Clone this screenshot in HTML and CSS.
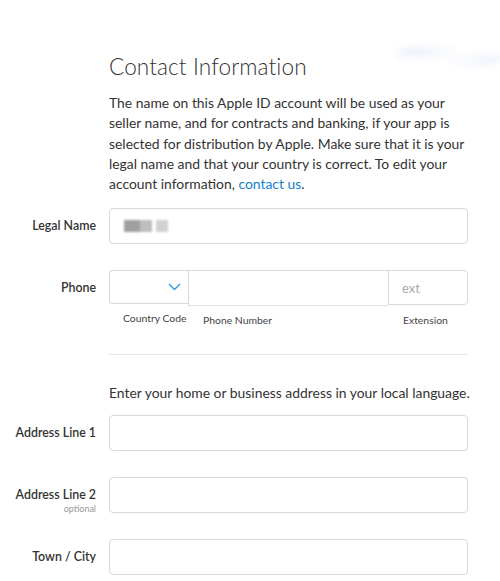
FILE: index.html
```html
<!DOCTYPE html>
<html>
<head>
<meta charset="utf-8">
<link rel="stylesheet" href="styles.css">
</head>
<body>
<div class="page">
  <div class="blur-deco"></div>
  <form class="form">
    <div class="intro">
      <h1 class="title">Contact Information</h1>
      <p class="lead">The name on this Apple ID account will be used as your seller name, and for contracts and banking, if your app is selected for distribution by Apple. Make sure that it is your legal name and that your country is correct. To edit your account information, <a class="link" href="#">contact us</a>.</p>
    </div>

    <div class="row row-legal">
      <label class="label">Legal Name</label>
      <div class="field"><div class="input input-name"><span class="masked"></span></div></div>
    </div>

    <div class="row row-phone">
      <label class="label label-phone">Phone</label>
      <div class="phone">
        <div class="phone-col col-cc">
          <div class="input select">
            <svg class="chev" width="13" height="8" viewBox="0 0 13 8"><path d="M1 1l5.5 5.5L12 1" fill="none" stroke="#2d9be0" stroke-width="1.4"/></svg>
          </div>
          <span class="sub sub-cc">Country Code</span>
        </div>
        <div class="phone-col col-num">
          <div class="input num"></div>
          <span class="sub sub-num">Phone Number</span>
        </div>
        <div class="phone-col col-ext">
          <div class="input ext"><span class="ph">ext</span></div>
          <span class="sub sub-ext">Extension</span>
        </div>
      </div>
    </div>

    <div class="row row-divider"><span></span><hr class="divider"></div>

    <div class="row row-note"><span></span><p class="note">Enter your home or business address in your local language.</p></div>

    <div class="row row-addr">
      <label class="label">Address Line 1</label>
      <div class="input"></div>
    </div>
    <div class="row row-addr">
      <label class="label">Address Line 2<span class="optional">optional</span></label>
      <div class="input"></div>
    </div>
    <div class="row row-addr">
      <label class="label">Town / City</label>
      <div class="input"></div>
    </div>
  </form>
</div>
</body>
</html>
```
FILE: styles.css
```css
* { box-sizing: border-box; }
html, body { margin: 0; padding: 0; background: #fff; }
body {
  font-family: "Lato", "Open Sans", sans-serif;
  color: #333;
  width: 500px;
  height: 581px;
  overflow: hidden;
}
.page { position: relative; padding-top: 51px; }
.blur-deco {
  position: absolute;
  left: 395px; top: 40px;
  width: 110px; height: 30px;
  border-radius: 50%;
  background: radial-gradient(ellipse at 20% 40%, rgba(200,215,240,0.35), transparent 40%),
              radial-gradient(ellipse at 90% 70%, rgba(200,215,240,0.35), transparent 35%);
  filter: blur(3px);
}
.form {
  display: grid;
  grid-template-columns: 96px 359px;
  column-gap: 13px;
}
.intro { grid-column: 2; }
.title {
  margin: 0;
  font-weight: 300;
  font-size: 22.6px;
  line-height: 32px;
  color: #333;
  letter-spacing: 0.1px;
}
.lead {
  margin: 10px 0 0;
  font-size: 13.9px;
  line-height: 20.3px;
  color: #333;
  width: 362px;
}
.link { color: #0f7fcb; text-decoration: none; }

.row { display: contents; }
.label {
  grid-column: 1;
  text-align: right;
  font-size: 12.4px;
  font-weight: 600;
  color: #333;
  display: flex;
  flex-direction: column;
  align-items: flex-end;
  justify-content: center;
  line-height: 16px;
  position: relative;
}
.row-legal .label, .row-legal .field { margin-top: 14px; }
.field { grid-column: 2; }
.input {
  grid-column: 2;
  height: 36px;
  border: 1px solid #d8d8d8;
  border-radius: 4px;
  background: #fff;
}
.input-name { display: flex; align-items: center; padding-left: 14px; }
.masked {
  width: 44px; height: 12px;
  background: linear-gradient(90deg, #a0a0a0 0 16px, #bdbdbd 16px 28px, #fff 28px 32px, #d0d0d0 32px 44px);
  filter: blur(1.2px);
}

.label-phone { margin-top: 26px; height: 35px; }
.phone { grid-column: 2; margin-top: 26px; display: flex; }
.phone-col { display: flex; flex-direction: column; }
.col-cc { width: 79px; }
.col-num { width: 200px; }
.col-ext { width: 80px; }
.phone .input { height: 35px; }
.select {
  border-radius: 4px 0 0 4px;
  border-right: none;
  display: flex; align-items: center; justify-content: flex-end;
  padding-right: 7px;
  height: 34px !important;
}
.num { border-radius: 0; height: 36px !important; border-right: none; border-bottom-color: #e2e2e2; }
.ext { border-radius: 0 4px 4px 0; display: flex; align-items: center; padding-left: 13px; }
.ph { color: #aaa; font-size: 13px; }
.sub { font-size: 10.4px; color: #444; line-height: 14px; }
.sub-cc { margin-top: 7px; padding-left: 14px; white-space: nowrap; }
.sub-num { margin-top: 7px; padding-left: 15px; }
.sub-ext { margin-top: 8px; padding-left: 15px; }

.divider {
  grid-column: 2;
  margin: 27px 0 0;
  border: none;
  border-top: 1px solid #e6e6e6;
  height: 0;
}
.note {
  grid-column: 2;
  margin: 28px 0 0;
  font-size: 13.9px;
  line-height: 20px;
  color: #333;
  white-space: nowrap;
}
.row-addr .label, .row-addr .input { margin-top: 26px; }
.row-note + .row-addr .label, .row-note + .row-addr .input { margin-top: 12px; }
.optional {
  position: absolute;
  right: 0; top: 100%;
  margin-top: -9px;
  font-size: 9px;
  font-weight: 400;
  color: #999;
  line-height: 10px;
}
```
